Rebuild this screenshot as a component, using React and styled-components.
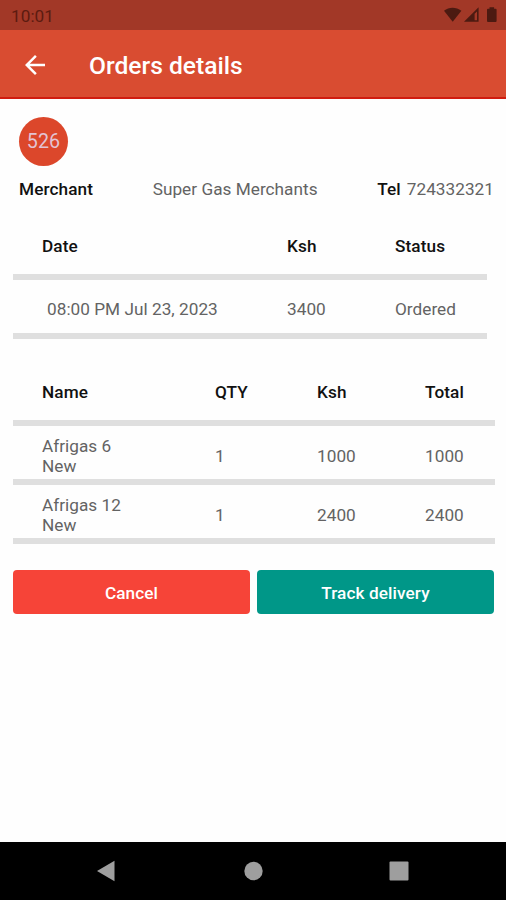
import React from 'react';
import styled, { createGlobalStyle } from 'styled-components';

const orders = [{ date: '08:00 PM Jul 23, 2023', ksh: '3400', status: 'Ordered' }];

const items = [
  { name: 'Afrigas 6', type: 'New', qty: '1', ksh: '1000', total: '1000' },
  { name: 'Afrigas 12', type: 'New', qty: '1', ksh: '2400', total: '2400' },
];

function App() {
  return (
    <>
      <GlobalStyle />
      <Screen>
        <StatusBar>
          <span>10:01</span>
          <svg width="54" height="18" viewBox="0 0 54 18" fill="#4c1a11">
            <path d="M0 3.8 C5 -0.4 12 -0.4 17.4 3.8 L8.7 14.8 Z" />
            <path d="M20 14.8 L34.6 0.2 V14.8 Z M30.6 6.8 V13.2 H33 V4.4 Z" fillRule="evenodd" />
            <path d="M43 2.8 Q43 1.8 44 1.8 H45.5 V0.2 H50.1 V1.8 H51.6 Q52.6 1.8 52.6 2.8 V13.9 Q52.6 14.9 51.6 14.9 H44 Q43 14.9 43 13.9 Z" />
          </svg>
        </StatusBar>

        <AppBar>
          <Back aria-label="Back">
            <svg width="30" height="30" viewBox="0 0 24 24" fill="#fff">
              <path d="M20 11H7.83l5.59-5.59L12 4l-8 8 8 8 1.41-1.41L7.83 13H20v-2z" />
            </svg>
          </Back>
          <h1>Orders details</h1>
        </AppBar>

        <Content>
          <Badge>526</Badge>
          <Merchant>
            <b>Merchant</b>
            <span>Super Gas Merchants</span>
            <Tel><b>Tel</b><span>724332321</span></Tel>
          </Merchant>

          <Table $width="474px">
            <Row $head $cols="245px 108px 1fr">
              <b>Date</b>
              <b>Ksh</b>
              <b>Status</b>
            </Row>
            {orders.map((o) => (
              <Row key={o.date} $cols="245px 108px 1fr">
                <DateCell>{o.date}</DateCell>
                <span>{o.ksh}</span>
                <span>{o.status}</span>
              </Row>
            ))}
          </Table>

          <Table $width="482px" $top="25px">
            <Row $head $cols="173px 102px 108px 1fr">
              <b>Name</b>
              <b>QTY</b>
              <b>Ksh</b>
              <b>Total</b>
            </Row>
            {items.map((i) => (
              <Row key={i.name} $pad="9px" $cols="173px 102px 108px 1fr">
                <span>{i.name}<br />{i.type}</span>
                <span>{i.qty}</span>
                <span>{i.ksh}</span>
                <span>{i.total}</span>
              </Row>
            ))}
          </Table>

          <Actions>
            <Button $color="#f64438">Cancel</Button>
            <Button $color="#009788">Track delivery</Button>
          </Actions>
        </Content>

        <NavBar>
          <svg width="20" height="22" viewBox="0 0 20 22"><path d="M1 11 L18.5 0.8 V21.2 Z" /></svg>
          <svg width="20" height="22" viewBox="0 0 20 22"><circle cx="10.5" cy="11" r="9.2" /></svg>
          <svg width="20" height="22" viewBox="0 0 20 22"><rect x="0.5" y="1.5" width="19" height="19" rx="1" /></svg>
        </NavBar>
      </Screen>
    </>
  );
}

const GlobalStyle = createGlobalStyle`
* {
  box-sizing: border-box;
}

body {
  margin: 0;
  background: #fff;
  font-family: Roboto, sans-serif;
}
`

const Screen = styled.div`
  width: 506px;
  height: 900px;
  display: flex;
  flex-direction: column;
  overflow: hidden;
  background: #fefefe;
  color: #636363;
  font-size: 17.2px;
  line-height: 19.6px;
  letter-spacing: 0.03px;

  b{
    font-weight: 500;
    letter-spacing: 0.1px;
    color: #111;
  }
`

const StatusBar = styled.div`
  height: 30px;
  flex: none;
  display: flex;
  align-items: center;
  justify-content: space-between;
  padding: 2px 8px 0 11px;
  background: #a23827;
  color: #5c1b10;

  span{
    padding-top: 2px;
  }
`

const AppBar = styled.header`
  height: 69px;
  flex: none;
  display: flex;
  align-items: center;
  padding: 2px 20px 0;
  background: #d94c31;
  border-bottom: 2px solid #d01c10;

  h1{
    margin: 0 0 0 39px;
    padding-top: 3px;
    font-size: 24.6px;
    line-height: 30px;
    font-weight: 500;
    letter-spacing: 0;
    color: #fff;
  }
`

const Back = styled.button`
  display: flex;
  padding: 0;
  border: none;
  background: none;
`

const Content = styled.main`
  flex: 1;
  padding: 18px 12px 0 13px;
`

const Badge = styled.div`
  width: 49px;
  height: 49px;
  margin-left: 6px;
  padding-top: 1px;
  display: flex;
  align-items: center;
  justify-content: center;
  border-radius: 50%;
  background: #dc472b;
  color: #e3c3d2;
  font-size: 19.7px;
`

const Merchant = styled.div`
  display: flex;
  justify-content: space-between;
  height: 20px;
  margin-top: 14px;
  padding-left: 6px;
`

const Tel = styled.div`
  display: flex;
  gap: 6px;
`

const Table = styled.div`
  width: ${(p) => p.$width};
  margin-top: ${(p) => p.$top || '18px'};
`

const Row = styled.div`
  display: grid;
  grid-template-columns: ${(p) => p.$cols};
  align-items: center;
  height: ${(p) => (p.$head ? '62px' : '59px')};
  padding-left: 29px;
  padding-top: ${(p) => (p.$head ? '2px' : p.$pad || '7px')};
  border-bottom: 6px solid #dfdfdf;
`

const DateCell = styled.span`
  padding-left: 5px;
`

const Actions = styled.div`
  display: flex;
  gap: 7px;
  margin-top: 26px;
`

const Button = styled.button`
  flex: 1;
  height: 44px;
  padding: 2px 0 0;
  border: none;
  border-radius: 4px;
  background: ${(p) => p.$color};
  color: #fff;
  font-family: inherit;
  font-size: 17.2px;
  font-weight: 500;
  letter-spacing: 0.1px;
`

const NavBar = styled.nav`
  height: 58px;
  flex: none;
  display: flex;
  align-items: center;
  justify-content: space-between;
  padding: 0 97px 0 96px;
  background: #000;

  svg{
    fill: #9e9e9e;
  }
`

export default App;
